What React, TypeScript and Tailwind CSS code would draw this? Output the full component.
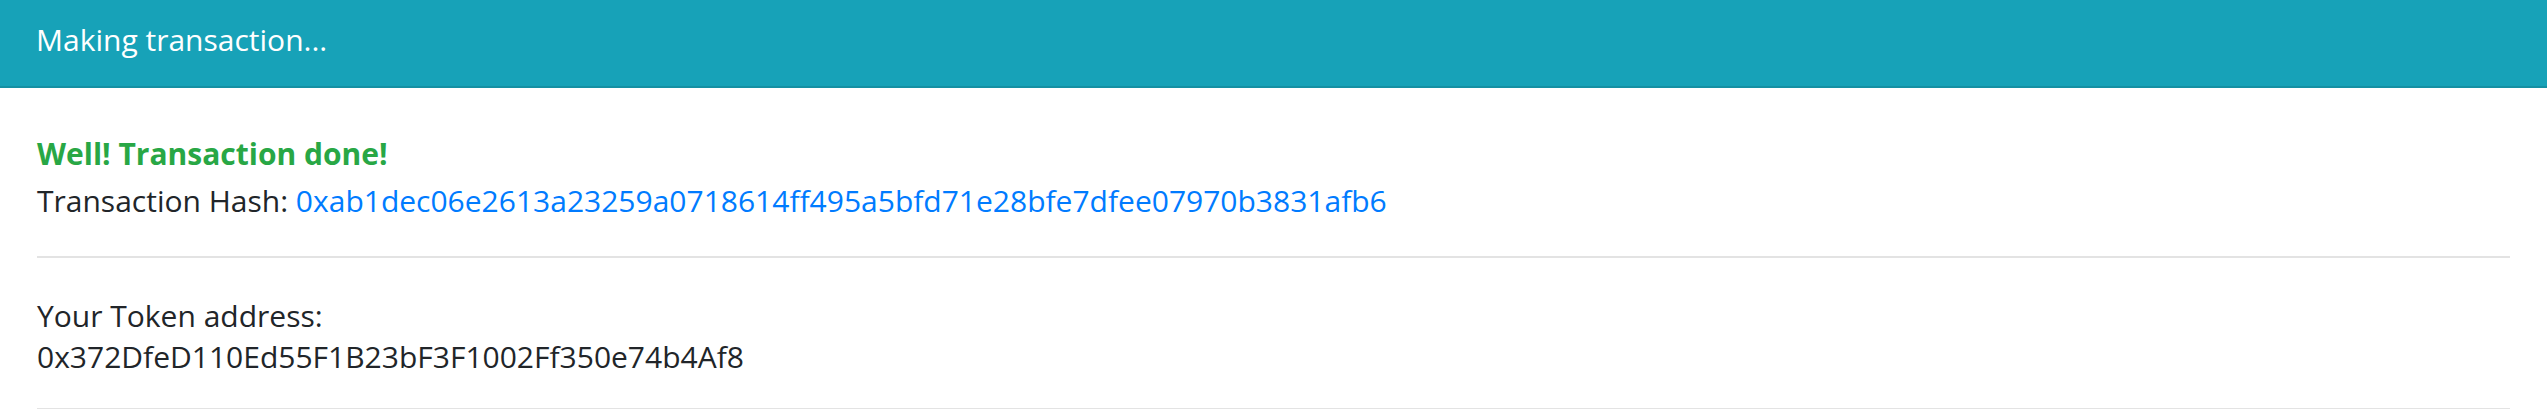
import React from "react";

export default function App() {
  const font = { fontFamily: '"Open Sans", "Noto Sans", sans-serif' };
  return (
    <div className="w-full bg-white text-[#212529]" style={font}>
      <div className="h-[88px] bg-[#17a2b8] border-b-2 border-[#1590a3] px-[36px] pt-[22px]">
        <div className="text-[30px] leading-[35px] text-white">Making transaction...</div>
      </div>
      <div className="px-[37px]">
        <div className="pt-[45px] pb-[35px] text-[30px] leading-[41px]">
          <div className="mb-[6px] font-bold text-[#28a745]">Well! Transaction done!</div>
          <div>
            Transaction Hash:{" "}
            <span className="text-[#007bff]">
              0xab1dec06e2613a23259a0718614ff495a5bfd71e28bfe7dfee07970b3831afb6
            </span>
          </div>
        </div>
        <div className="border-t-2 border-[#e3e3e3]" />
        <div className="pt-[37px] pb-[31px] text-[30px] leading-[41px]">
          <div>Your Token address:</div>
          <div>0x372DfeD110Ed55F1B23bF3F1002Ff350e74b4Af8</div>
        </div>
        <div className="border-t-2 border-[#e3e3e3]" />
      </div>
    </div>
  );
}
